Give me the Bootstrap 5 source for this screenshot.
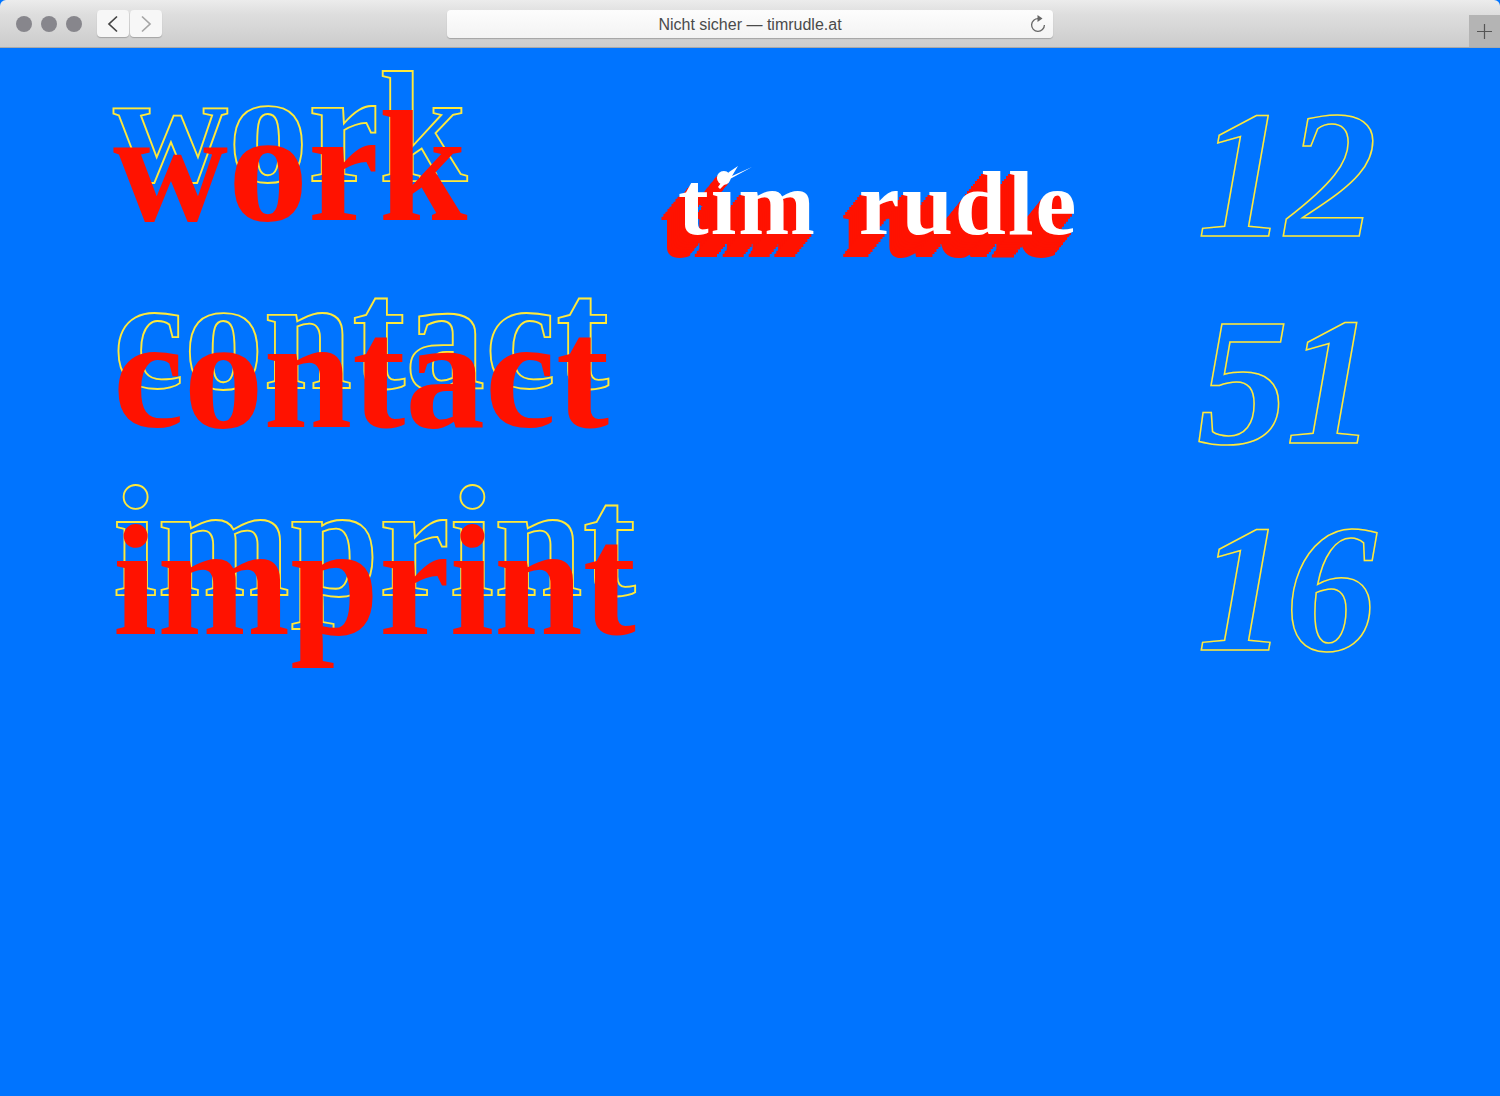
<!DOCTYPE html>
<html lang="de">
<head>
<meta charset="utf-8">
<title>timrudle.at</title>
<link href="https://cdn.jsdelivr.net/npm/bootstrap@5.3.0/dist/css/bootstrap.min.css" rel="stylesheet">
<style>
html,body{height:100%;overflow:hidden}
body{background:#0074ff;font-family:"Liberation Serif",serif}
.chrome{height:48px;background:linear-gradient(#ececec,#dedede 30%,#cccccc);border-bottom:1px solid #a9a9a9;border-radius:6px 6px 0 0;font-family:"Liberation Sans",sans-serif;padding-left:16px}
.light{width:16px;height:16px;border-radius:50%;background:#87868c}
.lights{gap:9px}
.navbtn{width:32px;height:27px;background:#f7f7f7;border-radius:4px;box-shadow:0 1px 1px rgba(0,0,0,.22)}
.navgroup{margin-left:15px;gap:1px}
.urlbar{position:absolute;left:447px;top:10px;width:606px;height:28px;padding-top:2px;background:linear-gradient(#fdfdfd,#f3f3f3);border-radius:4px;box-shadow:0 1px 1px rgba(0,0,0,.22);font-size:16px;color:#4a4a4a}
.urlbar svg{position:absolute;right:5px;top:4px}
.plus{position:absolute;right:0;top:15px;width:31px;height:32px;background:#b4b4b4}
.stage{padding-left:113px;padding-top:10px;height:1048px}
.navcol{width:544px}
.stackword{display:grid;height:207px;font-size:159.5px;line-height:140px;font-weight:700}
.stackword>span{grid-area:1/1;white-space:nowrap}
.ghost{color:transparent;-webkit-text-stroke:1.8px #ffe93a}
.solid{color:#ff1200;margin-top:39px}
.titlecol{width:530px;padding-top:90px;padding-left:21px}
.brand{position:relative;color:#fff;font-size:92px;line-height:110px;font-weight:700;white-space:nowrap;letter-spacing:2px;word-spacing:17px;text-shadow:-2px 2.5px #ff1200,-4px 5px #ff1200,-6px 7.5px #ff1200,-8px 10px #ff1200,-10px 12.5px #ff1200,-12px 15px #ff1200,-14px 17.5px #ff1200,-16px 20px #ff1200,-18px 23px #ff1200}
.flick{position:absolute;left:30px;top:15px}
.numcol{padding-left:10px}
.numeral{height:207px;font-size:183px;line-height:187px;font-style:italic;font-weight:700;letter-spacing:-3px;color:transparent;-webkit-text-stroke:1.5px #ffe93a;padding-top:23px;white-space:nowrap}
</style>
</head>
<body>
<header class="chrome position-relative d-flex align-items-center">
  <div class="d-flex lights"><div class="light"></div><div class="light"></div><div class="light"></div></div>
  <div class="d-flex navgroup">
    <div class="navbtn d-flex align-items-center justify-content-center"><svg width="14" height="18" viewBox="0 0 14 18"><path d="M11 1.5 3 9l8 7.5" fill="none" stroke="#444" stroke-width="1.7"/></svg></div>
    <div class="navbtn d-flex align-items-center justify-content-center"><svg width="14" height="18" viewBox="0 0 14 18"><path d="M3 1.5 11 9l-8 7.5" fill="none" stroke="#a5a5a5" stroke-width="1.7"/></svg></div>
  </div>
  <div class="urlbar d-flex align-items-center justify-content-center">Nicht sicher — timrudle.at
    <svg width="20" height="20" viewBox="0 0 20 20"><path d="M10.5 4.6A6.4 6.4 0 1 0 16.4 11" fill="none" stroke="#666" stroke-width="1.3"/><path d="M9.5 1 14.5 4.6 9.5 8z" fill="#666"/></svg>
  </div>
  <div class="plus d-flex align-items-center justify-content-center"><svg width="15" height="15" viewBox="0 0 15 15"><path d="M7.5 0v15M0 7.5h15" stroke="#555" stroke-width="1.2"/></svg></div>
</header>
<main class="stage d-flex">
  <nav class="navcol">
    <div class="stackword"><span class="ghost">work</span><span class="solid">work</span></div>
    <div class="stackword"><span class="ghost">contact</span><span class="solid">contact</span></div>
    <div class="stackword"><span class="ghost">imprint</span><span class="solid">imprint</span></div>
  </nav>
  <div class="titlecol"><div class="brand">tim rudle<svg class="flick" width="45" height="26" viewBox="0 0 45 26"><path d="M10 24 21 9 30 3 24 13 44 4 22 16 12 26z" fill="#fff"/></svg></div></div>
  <div class="numcol">
    <div class="numeral">12</div>
    <div class="numeral">51</div>
    <div class="numeral">16</div>
  </div>
</main>
<script src="https://cdn.jsdelivr.net/npm/bootstrap@5.3.0/dist/js/bootstrap.bundle.min.js"></script>
</body>
</html>
